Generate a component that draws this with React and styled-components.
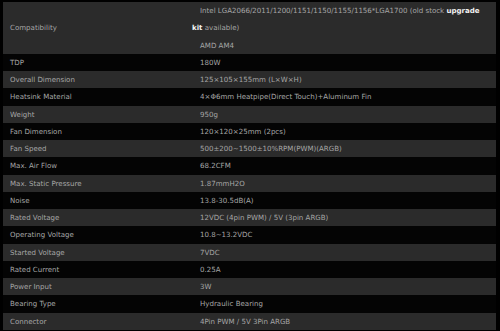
import React from "react";
import styled, { createGlobalStyle } from "styled-components";

const Global = createGlobalStyle`
  html, body { margin: 0; padding: 0; background: #000; }
  body { width: 500px; height: 331px; overflow: hidden; }
`;

const Page = styled.div`
  padding: 2px 4px 0 3px;
  background: #000;
  font-family: "DejaVu Sans", Verdana, sans-serif;
  font-size: 7.05px;
  color: #a6a6a6;
`;

const Table = styled.div`
  display: grid;
  grid-template-columns: 189px 1fr;
  width: 493px;
`;

const Row = styled.div`
  display: contents;
`;

const Cell = styled.div`
  background: ${(p) => (p.$alt ? "#2b2b2b" : "#040404")};
  display: flex;
  flex-direction: column;
  justify-content: center;
  line-height: 17.25px;
  min-height: 17.25px;
  padding: ${(p) => (p.$label ? "0 0 0 7px" : "0 12px 0 0")};
  white-space: ${(p) => (p.$label ? "nowrap" : "normal")};
`;

const Line = styled.div`
  text-indent: 8px;
`;

const Strong = styled.b`
  color: #f2f2f2;
  font-weight: bold;
`;

const rows = [
  ["TDP", "180W"],
  ["Overall Dimension", "125×105×155mm (L×W×H)"],
  ["Heatsink Material", "4×Φ6mm Heatpipe(Direct Touch)+Aluminum Fin"],
  ["Weight", "950g"],
  ["Fan Dimension", "120×120×25mm (2pcs)"],
  ["Fan Speed", "500±200~1500±10%RPM(PWM)(ARGB)"],
  ["Max. Air Flow", "68.2CFM"],
  ["Max. Static Pressure", "1.87mmH2O"],
  ["Noise", "13.8-30.5dB(A)"],
  ["Rated Voltage", "12VDC (4pin PWM) / 5V (3pin ARGB)"],
  ["Operating Voltage", "10.8~13.2VDC"],
  ["Started Voltage", "7VDC"],
  ["Rated Current", "0.25A"],
  ["Power Input", "3W"],
  ["Bearing Type", "Hydraulic Bearing"],
  ["Connector", "4Pin PWM / 5V 3Pin ARGB"],
];

export default function App() {
  return (
    <Page>
      <Global />
      <Table>
        <Row>
          <Cell $alt $label>Compatibility</Cell>
          <Cell $alt>
            <Line>
              Intel LGA2066/2011/1200/1151/1150/1155/1156*LGA1700 (old stock{" "}
              <Strong>upgrade kit</Strong> available)
            </Line>
            <Line>AMD AM4</Line>
          </Cell>
        </Row>
        {rows.map(([k, v], i) => (
          <Row key={k}>
            <Cell $alt={i % 2 === 1} $label>{k}</Cell>
            <Cell $alt={i % 2 === 1}>
              <Line>{v}</Line>
            </Cell>
          </Row>
        ))}
      </Table>
    </Page>
  );
}
